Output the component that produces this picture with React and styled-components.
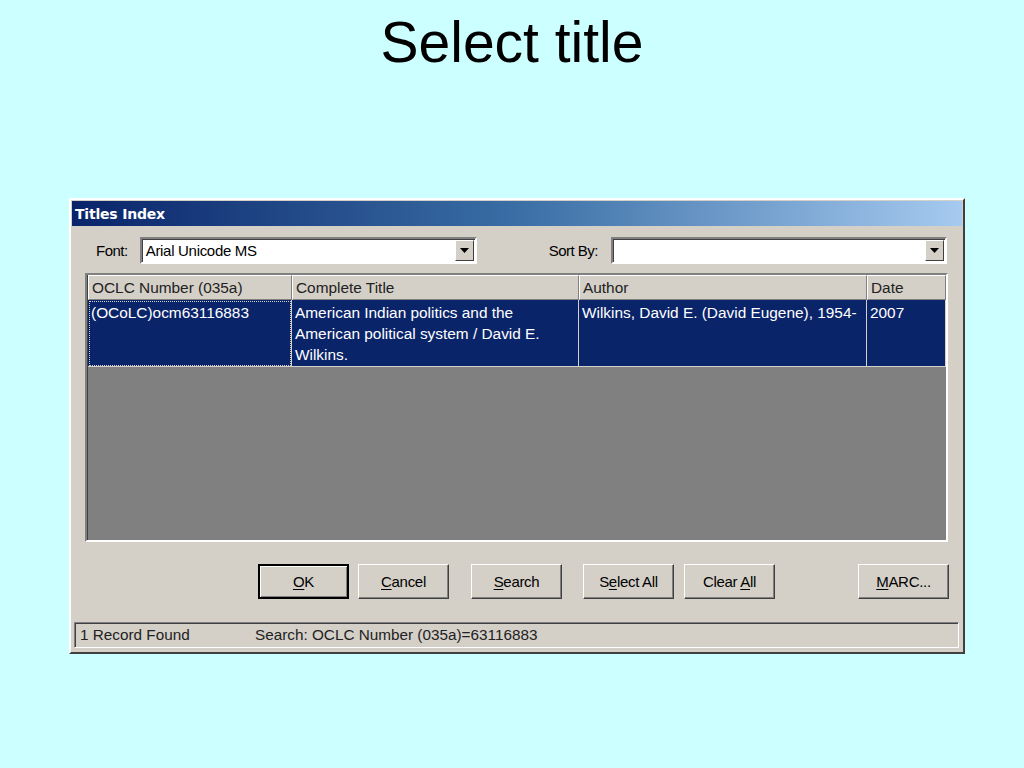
import React from 'react';
import styled, { createGlobalStyle } from 'styled-components';

const GlobalStyle = createGlobalStyle`
  html, body {
    margin: 0;
    padding: 0;
    background: #ccffff;
  }
  body {
    font-family: "Liberation Sans", Arial, sans-serif;
  }
`;

const Page = styled.div`
  width: 1024px;
  height: 768px;
  display: flex;
  flex-direction: column;
  align-items: flex-start;
`;

const Heading = styled.h1`
  align-self: stretch;
  margin: 10px 0 0;
  height: 64px;
  text-align: center;
  font-family: "Liberation Sans", Arial, sans-serif;
  font-weight: normal;
  font-size: 57px;
  line-height: 64px;
  color: #000;
`;

const Dialog = styled.div`
  margin: 124px 0 0 69px;
  width: 896px;
  height: 456px;
  box-sizing: border-box;
  background: #d4d0c8;
  border: 2px solid;
  border-color: #ffffff #404040 #404040 #ffffff;
  display: flex;
  flex-direction: column;
  font-family: "Liberation Sans", Arial, sans-serif;
`;

const TitleBar = styled.div`
  height: 25px;
  margin: 1px 1px 0;
  background: linear-gradient(to right, #0a246a 0%, #3a6ea5 50%, #a6caf0 100%);
  color: #fff;
  font-family: "DejaVu Sans", Tahoma, sans-serif;
  font-weight: bold;
  font-size: 14px;
  display: flex;
  align-items: center;
  padding-left: 3px;
  letter-spacing: -0.2px;
`;

const FormRow = styled.div`
  display: flex;
  align-items: center;
  height: 28px;
  margin-top: 10px;
  padding: 0 15px 0 25px;
`;

const Label = styled.span`
  font-size: 15px;
  color: #000;
  margin-right: ${p => p.gap || 8}px;
  margin-left: ${p => p.left || 0}px;
  letter-spacing: -0.5px;
`;

const Combo = styled.div`
  width: ${p => p.w}px;
  height: 27px;
  box-sizing: border-box;
  background: #fff;
  border: 2px solid;
  border-color: #808080 #ffffff #ffffff #808080;
  box-shadow: inset 1px 1px 0 #404040;
  display: flex;
  align-items: center;
  justify-content: space-between;
  font-size: 15px;
  padding-left: 4px;
  letter-spacing: -0.3px;
`;

const DropButton = styled.div`
  width: 19px;
  height: 21px;
  box-sizing: border-box;
  background: #d4d0c8;
  border: 1px solid;
  border-color: #ffffff #404040 #404040 #ffffff;
  display: flex;
  align-items: center;
  justify-content: center;
  margin-right: 1px;
`;

const Grid = styled.div`
  margin: 9px 15px 0 14px;
  height: 269px;
  box-sizing: border-box;
  background: #808080;
  border: 2px solid;
  border-color: #808080 #ffffff #ffffff #808080;
  box-shadow: inset 1px 1px 0 #404040;
  padding: 0 0 0 1px;
  display: flex;
  flex-direction: column;
`;

const Row = styled.div`
  display: grid;
  grid-template-columns: 204px 287px 288px 79px;
`;

const HeadCell = styled.div`
  height: 25px;
  box-sizing: border-box;
  background: #d4d0c8;
  border: 1px solid;
  border-color: #ffffff #808080 #808080 #ffffff;
  font-size: 15.4px;
  color: #222;
  padding: 3px 0 0 3px;
  white-space: nowrap;
  overflow: hidden;
`;

const Cell = styled.div`
  height: 67px;
  box-sizing: border-box;
  background: #0a246a;
  color: #fff;
  font-size: 15.4px;
  line-height: 21px;
  padding: 2px 4px 0 3px;
  border-right: 1px solid #d4d0c8;
  border-bottom: 1px solid #d4d0c8;
  outline: ${p => (p.focus ? '1px dotted #d4d0c8' : 'none')};
  outline-offset: -2px;
`;

const ButtonRow = styled.div`
  display: flex;
  align-items: center;
  height: 36px;
  margin-top: 21px;
  padding-left: 187px;
`;

const Button = styled.div`
  width: ${p => p.w || 91}px;
  height: 35px;
  box-sizing: border-box;
  background: #d4d0c8;
  border: ${p => (p.def ? '2px' : '1px')} solid;
  border-color: ${p => (p.def ? '#000' : '#ffffff #404040 #404040 #ffffff')};
  box-shadow: ${p =>
    p.def ? 'inset 1px 1px 0 #fff, inset -1px -1px 0 #808080' : 'inset -1px -1px 0 #808080'};
  margin-left: ${p => p.gap || 0}px;
  display: flex;
  align-items: center;
  justify-content: center;
  font-size: 15px;
  letter-spacing: -0.3px;
  color: #000;

  u {
    text-decoration: underline;
    text-underline-offset: 2px;
  }
`;

const StatusBar = styled.div`
  margin: 23px 4px 0 3px;
  height: 26px;
  box-sizing: border-box;
  border: 1px solid;
  border-color: #808080 #ffffff #ffffff #808080;
  box-shadow: inset 1px 1px 0 #404040;
  display: flex;
  align-items: center;
  font-size: 15.3px;
  color: #222;
  padding-left: 5px;
`;

const StatusText = styled.span`
  width: ${p => p.w || 'auto'};
`;

const Arrow = () => (
  <svg width="9" height="5" viewBox="0 0 9 5">
    <path d="M0 0 H9 L4.5 5 Z" fill="#000" />
  </svg>
);

export default function App() {
  return (
    <>
      <GlobalStyle />
      <Page>
        <Heading>Select title</Heading>
        <Dialog>
          <TitleBar>Titles Index</TitleBar>
          <FormRow>
            <Label gap={12}>Font:</Label>
            <Combo w={337}>
              Arial Unicode MS
              <DropButton><Arrow /></DropButton>
            </Combo>
            <Label left={72} gap={13}>Sort By:</Label>
            <Combo w={336}>
              <span />
              <DropButton><Arrow /></DropButton>
            </Combo>
          </FormRow>
          <Grid>
            <Row>
              <HeadCell>OCLC Number (035a)</HeadCell>
              <HeadCell>Complete Title</HeadCell>
              <HeadCell>Author</HeadCell>
              <HeadCell>Date</HeadCell>
            </Row>
            <Row>
              <Cell focus>(OCoLC)ocm63116883</Cell>
              <Cell>American Indian politics and the American political system / David E. Wilkins.</Cell>
              <Cell>Wilkins, David E. (David Eugene), 1954-</Cell>
              <Cell>2007</Cell>
            </Row>
          </Grid>
          <ButtonRow>
            <Button def w={91}><span><u>O</u>K</span></Button>
            <Button gap={9}><span><u>C</u>ancel</span></Button>
            <Button gap={22}><span><u>S</u>earch</span></Button>
            <Button gap={21}><span>S<u>e</u>lect All</span></Button>
            <Button gap={10}><span>Clear <u>A</u>ll</span></Button>
            <Button gap={83}><span><u>M</u>ARC...</span></Button>
          </ButtonRow>
          <StatusBar>
            <StatusText w="175px">1 Record Found</StatusText>
            <StatusText>Search: OCLC Number (035a)=63116883</StatusText>
          </StatusBar>
        </Dialog>
      </Page>
    </>
  );
}
